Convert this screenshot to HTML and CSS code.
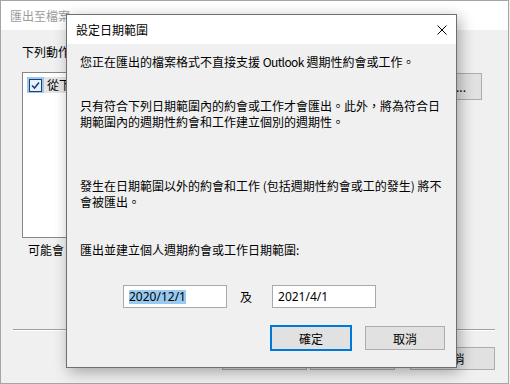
FILE: index.html
```html
<!DOCTYPE html>
<html lang="zh-Hant">
<head>
    <meta charset="UTF-8">
    <meta name="viewport" content="width=device-width, initial-scale=1.0">
    <title>設定日期範圍</title>
    <link rel="stylesheet" href="styles.css">
</head>
<body>
    <div class="win">
        <div class="win-title">匯出至檔案</div>
        <div class="win-body">
            <div class="label">下列動作</div>
            <div class="list-row">
                <div class="list">
                    <div class="item">
                        <span class="check">
                            <span class="box">
                                <svg width="11" height="11" viewBox="0 0 11 11">
                                    <path d="M2 5.5 L4.5 8 L9 2.5" fill="none" stroke="#1f3f73" stroke-width="1.6"/>
                                </svg>
                            </span>
                        </span>
                        <span class="item-text">從下</span>
                    </div>
                </div>
                <button class="btn map-btn">...</button>
            </div>
            <div class="note">可能會</div>
            <div class="sep"></div>
            <div class="win-buttons">
                <button class="btn wb"></button>
                <button class="btn wb"></button>
                <button class="btn wb last">取消</button>
            </div>
        </div>
    </div>

    <div class="dialog">
        <div class="d-title">
            <span>設定日期範圍</span>
            <svg class="close" width="10" height="10" viewBox="0 0 10 10">
                <path d="M0.5 0.5 L9.5 9.5 M9.5 0.5 L0.5 9.5" stroke="#000" stroke-width="1"/>
            </svg>
        </div>
        <div class="d-body">
            <p class="p1">您正在匯出的檔案格式不直接支援 <span class="latin">Outlook</span> 週期性約會或工作。</p>
            <p class="p2">只有符合下列日期範圍內的約會或工作才會匯出。此外，將為符合日<br>期範圍內的週期性約會和工作建立個別的週期性。</p>
            <p class="p3">發生在日期範圍以外的約會和工作 (包括週期性約會或工的發生) 將不<br>會被匯出。</p>
            <p class="p4">匯出並建立個人週期約會或工作日期範圍:</p>
            <div class="range">
                <div class="field"><span class="sel">2020/12/1</span></div>
                <span class="and">及</span>
                <div class="field">2021/4/1</div>
            </div>
            <div class="d-buttons">
                <button class="btn ok">確定</button>
                <button class="btn cancel">取消</button>
            </div>
        </div>
    </div>
</body>
</html>
```

FILE: styles.css
```css
body {
    margin: 0;
    font-family: "Noto Sans CJK TC", sans-serif;
    font-size: 12px;
    color: #000;
    background-color: #f0f0f0;
}
.win {
    width: 509px;
    height: 384px;
    box-sizing: border-box;
    border: 1px solid #a5a5a5;
    background-color: #f0f0f0;
}
.win-title {
    height: 29px;
    line-height: 29px;
    padding-left: 9px;
    background-color: #fff;
    color: #9c9c9c;
}
.win-body {
    padding: 14px 26px 0 21px;
}
.label {
    line-height: 16px;
}
.list-row {
    display: flex;
    margin-top: 12px;
}
.list {
    width: 340px;
    height: 166px;
    box-sizing: border-box;
    border: 1px solid #828790;
    background-color: #fff;
    padding: 4px 0 0 4px;
}
.item {
    display: flex;
    align-items: center;
    height: 16px;
}
.check {
    width: 17px;
    height: 16px;
    display: flex;
    align-items: center;
    justify-content: center;
    background-color: #99c9ef;
}
.box {
    width: 11px;
    height: 11px;
    border: 1px solid #1f3f73;
    background-color: #e8f2fb;
    display: flex;
}
.item-text {
    line-height: 16px;
    padding: 0 6px 0 3px;
    background-color: #e5e5e5;
}
.btn {
    font-family: "Noto Sans CJK TC", sans-serif;
    font-size: 12px;
    color: #000;
    background-color: #e1e1e1;
    border: 1px solid #adadad;
    padding: 0;
    box-sizing: border-box;
}
.map-btn {
    margin-left: auto;
    margin-top: 1px;
    width: 113px;
    height: 27px;
    padding-right: 15px;
    text-align: right;
}
.note {
    margin-top: 4px;
    padding-left: 6px;
    line-height: 16px;
}
.sep {
    margin: 71px -13px 0 -9px;
    border-top: 1px solid #a0a0a0;
    border-bottom: 1px solid #fff;
}
.win-buttons {
    display: flex;
    justify-content: flex-end;
    margin: 16px -13px 0 0;
}
.wb {
    width: 85px;
    height: 23px;
    margin-left: 3px;
}
.wb.last {
    margin-left: 15px;
}
.dialog {
    position: absolute;
    left: 66px;
    top: 14px;
    width: 391px;
    height: 354px;
    box-sizing: border-box;
    border: 1px solid #6f6f6f;
    background-color: #f0f0f0;
    box-shadow: 3px 4px 14px rgba(0, 0, 0, 0.32);
}
.d-title {
    height: 29px;
    display: flex;
    align-items: center;
    padding: 0 9px;
    background-color: #fff;
}
.close {
    margin-left: auto;
}
.d-body {
    padding: 10px 11px 0 13px;
}
.d-body p {
    margin: 0;
    line-height: 16px;
    white-space: nowrap;
}
.latin {
    letter-spacing: -0.6px;
}
.p2 {
    margin-top: 28px !important;
}
.p3 {
    margin-top: 48px !important;
}
.p4 {
    margin-top: 32px !important;
}
.range {
    display: flex;
    align-items: center;
    margin-top: 27px;
    padding-left: 43px;
}
.field {
    width: 104px;
    height: 23px;
    box-sizing: border-box;
    border: 1px solid #a9a9a9;
    background-color: #fff;
    padding-left: 5px;
    line-height: 21px;
    font-family: "Noto Sans", "Noto Sans CJK TC", sans-serif;
}
.sel {
    display: inline-block;
    line-height: 14px;
    background-color: #99c9ef;
}
.and {
    margin: 0 20px 0 13px;
}
.d-buttons {
    display: flex;
    justify-content: flex-end;
    align-items: center;
    margin-top: 17px;
}
.ok {
    width: 82px;
    height: 26px;
    border: 2px solid #0078d7;
}
.cancel {
    width: 80px;
    height: 24px;
    margin-left: 13px;
}
```
